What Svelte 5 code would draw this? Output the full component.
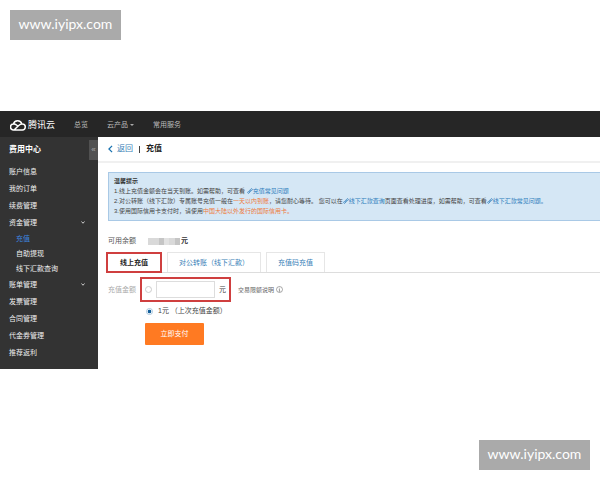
<script>
  const before = ['账户信息', '我的订单', '续费管理'];
  const sub = ['充值', '自助提现', '线下汇款查询'];
  const after = ['发票管理', '合同管理', '代金券管理', '推荐返利'];
  const tabs = ['线上充值', '对公转账（线下汇款）', '充值码充值'];
  let active = $state(0);
  let choice = $state('last');
  let amount = $state('');
</script>

{#snippet chain()}
  <svg class="chain" viewBox="0 0 16 16" aria-hidden="true">
    <path d="M6 10 L10 6 M8 5 L10.500 2.500 Q12 1 13.500 2.500 Q15 4 13.500 5.500 L10.500 8.500 Q9.500 9.500 8 9 M8 10.500 L5.500 13.500 Q4 15 2.500 13.500 Q1 12 2.500 10.500 L5.500 7.500 Q6.500 6.500 8 7" />
  </svg>
{/snippet}

{#snippet chevron()}
  <svg class="chevron" viewBox="0 0 8 6" aria-hidden="true"><path d="M1 1 L4 4.500 L7 1" /></svg>
{/snippet}

<div class="page">
  <div class="mark top">www.iyipx.com</div>
  <div class="console">
    <header>
      <a class="brand" href="#home">
        <svg viewBox="0 0 32 24" aria-hidden="true">
          <path d="M7 22 H24 A6 6 0 0 0 25 10 Q21 9.500 18 12.500 L8 22 M7 22 A6 6 0 0 1 7 10 Q10 9.500 13 12 L16 14.500 M7 10 A8.500 8.500 0 0 1 23.500 9.500" />
        </svg>
        <span>腾讯云</span>
      </a>
      <nav>
        <a href="#overview">总览</a>
        <a href="#products">云产品<i class="caret"></i></a>
        <a href="#services">常用服务</a>
      </nav>
    </header>
    <div class="body">
      <aside>
        <div class="side-head">
          <h2>费用中心</h2>
          <button class="fold" aria-label="收起">«</button>
        </div>
        <ul>
          {#each before as item}<li><a href="#menu">{item}</a></li>{/each}
          <li>
            <a href="#menu">资金管理{@render chevron()}</a>
            <ul class="sub">
              {#each sub as item, i}<li><a href="#menu" class:current={i === 0}>{item}</a></li>{/each}
            </ul>
          </li>
          <li><a href="#menu">账单管理{@render chevron()}</a></li>
          {#each after as item}<li><a href="#menu">{item}</a></li>{/each}
        </ul>
      </aside>
      <main>
        <div class="title">
          <a href="#back"><svg viewBox="0 0 8 12" aria-hidden="true"><path d="M6.500 1 L1.500 6 L6.500 11" /></svg>返回</a>
          <i class="bar"></i>
          <h1>充值</h1>
        </div>
        <div class="content">
          <section class="notice">
            <h3>温馨提示</h3>
            <p>1.线上充值金额会在当天到账。如需帮助，可查看 <a href="#faq">{@render chain()}充值常见问题</a></p>
            <p>2.对公转账（线下汇款）专属账号充值一般在<em>一天以内到账</em>，请您耐心等待。 您可以在<a href="#query">{@render chain()}线下汇款查询</a>页面查看处理进度，如需帮助，可查看<a href="#faq2">{@render chain()}线下汇款常见问题。</a></p>
            <p>3.使用国际信用卡支付时，请使用<em>中国大陆以外发行的国际信用卡。</em></p>
          </section>
          <div class="balance">
            <span>可用余额</span>
            <span class="mosaic"><i></i><i></i><i></i><i></i><i></i><i></i></span>
            <b>元</b>
          </div>
          <div class="tabs" role="tablist">
            {#each tabs as tab, i}
              <button role="tab" aria-selected={active === i} class:active={active === i} onclick={() => (active = i)}>{tab}</button>
            {/each}
          </div>
          <form onsubmit={(e) => e.preventDefault()}>
            <div class="row">
              <label class="name" for="amount">充值金额</label>
              <div class="boxed">
                <input type="radio" name="sum" value="custom" aria-label="其他金额" bind:group={choice} />
                <input type="text" id="amount" bind:value={amount} />
                <span>元</span>
              </div>
              <a class="limit" href="#limit">交易限额说明
                <svg viewBox="0 0 14 14" aria-hidden="true"><circle cx="7" cy="7" r="6" /><path d="M7 3.500 V5 M5.500 6.500 H7 V10.500 M5.500 10.500 H8.500" /></svg>
              </a>
            </div>
            <label class="last"><input type="radio" name="sum" value="last" bind:group={choice} /><span>1元 （上次充值金额）</span></label>
            <button class="pay">立即支付</button>
          </form>
        </div>
      </main>
    </div>
  </div>
  <div class="mark bottom">www.iyipx.com</div>
</div>

<style>
  :global(body) { background: #fff; }
  .page {
    position: relative;
    box-sizing: border-box;
    min-height: 100vh;
    padding-top: 111px;
    overflow: hidden;
    font: 7px/10px "Liberation Sans", "Noto Sans CJK SC", sans-serif;
    color: #444;
  }
  .page * { box-sizing: border-box; }
  a { color: #3a7fb8; text-decoration: none; }
  ul { list-style: none; margin: 0; padding: 0; }
  h1, h2, h3, p { margin: 0; }
  button, input { font: inherit; margin: 0; }
  svg { fill: none; stroke: currentColor; flex: none; }

  .mark {
    position: absolute;
    width: 111px;
    height: 30px;
    background: #aaa;
    color: #fff;
    font: 14px/28px Lato, sans-serif;
    text-align: center;
  }
  .top { left: 10px; top: 10px; }
  .bottom { right: 10px; bottom: 10px; }

  header {
    display: flex;
    align-items: center;
    height: 26px;
    padding: 2px 0 0 10px;
    gap: 19px;
    background: #262626;
  }
  .brand { display: flex; align-items: center; gap: 2px; color: #fff; font-size: 9px; }
  .brand svg { width: 16px; height: 12px; stroke-width: 3; }
  nav { display: flex; gap: 19px; }
  nav a { display: flex; align-items: center; color: #bbb; }
  .caret { margin-left: 2px; border: 2px solid transparent; border-top-color: #aaa; border-bottom: 0; }

  .body { display: flex; }
  aside { flex: none; width: 98px; padding-bottom: 8px; background: #333; color: #eee; }
  .side-head { display: flex; align-items: center; justify-content: space-between; height: 26px; padding-left: 9px; }
  .side-head h2 { font-size: 8px; line-height: 12px; color: #fff; }
  .fold { width: 9px; height: 20px; padding: 0; border: 0; background: #515151; color: #aaa; font-size: 8px; line-height: 16px; }
  aside li a { display: flex; align-items: center; justify-content: space-between; height: 17px; padding: 0 13px 0 9px; color: #f0f0f0; }
  aside .sub a { height: 15px; padding-left: 16px; }
  aside .sub .current { color: #3d86e0; }
  .chevron { width: 4px; height: 3px; color: #ccc; stroke-width: 2; }

  main { flex: 1; min-width: 0; background: #fff; }
  .title { display: flex; align-items: center; height: 26px; padding-left: 10px; gap: 6px; border-bottom: 2px solid #f0f0f0; font-size: 8px; }
  .title a { display: flex; align-items: center; gap: 4px; }
  .title svg { width: 5px; height: 8px; stroke: #1972b0; stroke-width: 2; }
  .title h1 { font-size: 8px; color: #222; }
  .bar { width: 1px; height: 7px; background: #444; }

  .content { padding: 9px 0 0 10px; }
  .notice { padding: 3px 0 4px 5px; border: 1px solid #a9c9e6; border-right: 0; background: #d5e7f5; font-size: 6px; line-height: 10px; white-space: nowrap; overflow: hidden; color: #444; }
  .notice h3 { font-size: 6px; color: #333; }
  .notice em { font-style: normal; color: #ee7a3c; }
  .notice a { color: #2b7bbb; }
  .chain { width: 6px; height: 6px; stroke-width: 2; vertical-align: -1px; }

  .balance { display: flex; align-items: center; gap: 12px; padding: 15px 0 6px; color: #555; }
  .balance b { margin-left: -11px; color: #333; }
  .mosaic { display: flex; height: 7px; width: 32px; }
  .mosaic i { flex: 1; background: #d9d9d9; }
  .mosaic i:nth-child(3n) { background: #c5c5c5; }
  .mosaic i:nth-child(4n) { background: #e2e2e2; }

  .tabs { display: flex; align-items: flex-end; gap: 5px; margin-left: -2px; border-bottom: 1px solid #ddd; }
  .tabs button { height: 20px; padding: 0 11px; border: 1px solid #e6e6e6; border-bottom: 0; background: #fff; color: #3a7fb8; }
  .tabs .active { height: 21px; margin-bottom: -1px; padding: 0 12px; border: 2px solid #cf3f3f; color: #222; font-weight: bold; }

  form { padding-top: 4px; }
  .row { display: flex; align-items: center; }
  .name { width: 32px; color: #aaa; }
  .boxed { display: flex; align-items: center; height: 25px; width: 91px; padding: 0 3px; gap: 4px; border: 2px solid #cf3f3f; }
  input[type="text"] { flex: 1; min-width: 0; height: 17px; border: 1px solid #ddd; background: #fff; padding: 0 3px; }
  input[type="radio"] { appearance: none; flex: none; width: 7px; height: 7px; border: 1px solid #ccc; border-radius: 50%; background: #fff; }
  input[type="radio"]:checked { border-color: #a9c6dd; background: radial-gradient(circle, #14609c 45%, #fff 60%); }
  .limit { display: flex; align-items: center; gap: 2px; margin-left: 7px; font-size: 6px; color: #666; }
  .limit svg { width: 7px; height: 7px; stroke-width: 1; stroke: #555; }
  .last { display: flex; align-items: center; gap: 5px; width: fit-content; margin: 4px 0 7px 38px; }
  .pay { display: block; width: 59px; height: 22px; margin-left: 37px; padding: 0; border: 0; border-radius: 1px; background: #ff7a22; color: #fff; }
</style>
